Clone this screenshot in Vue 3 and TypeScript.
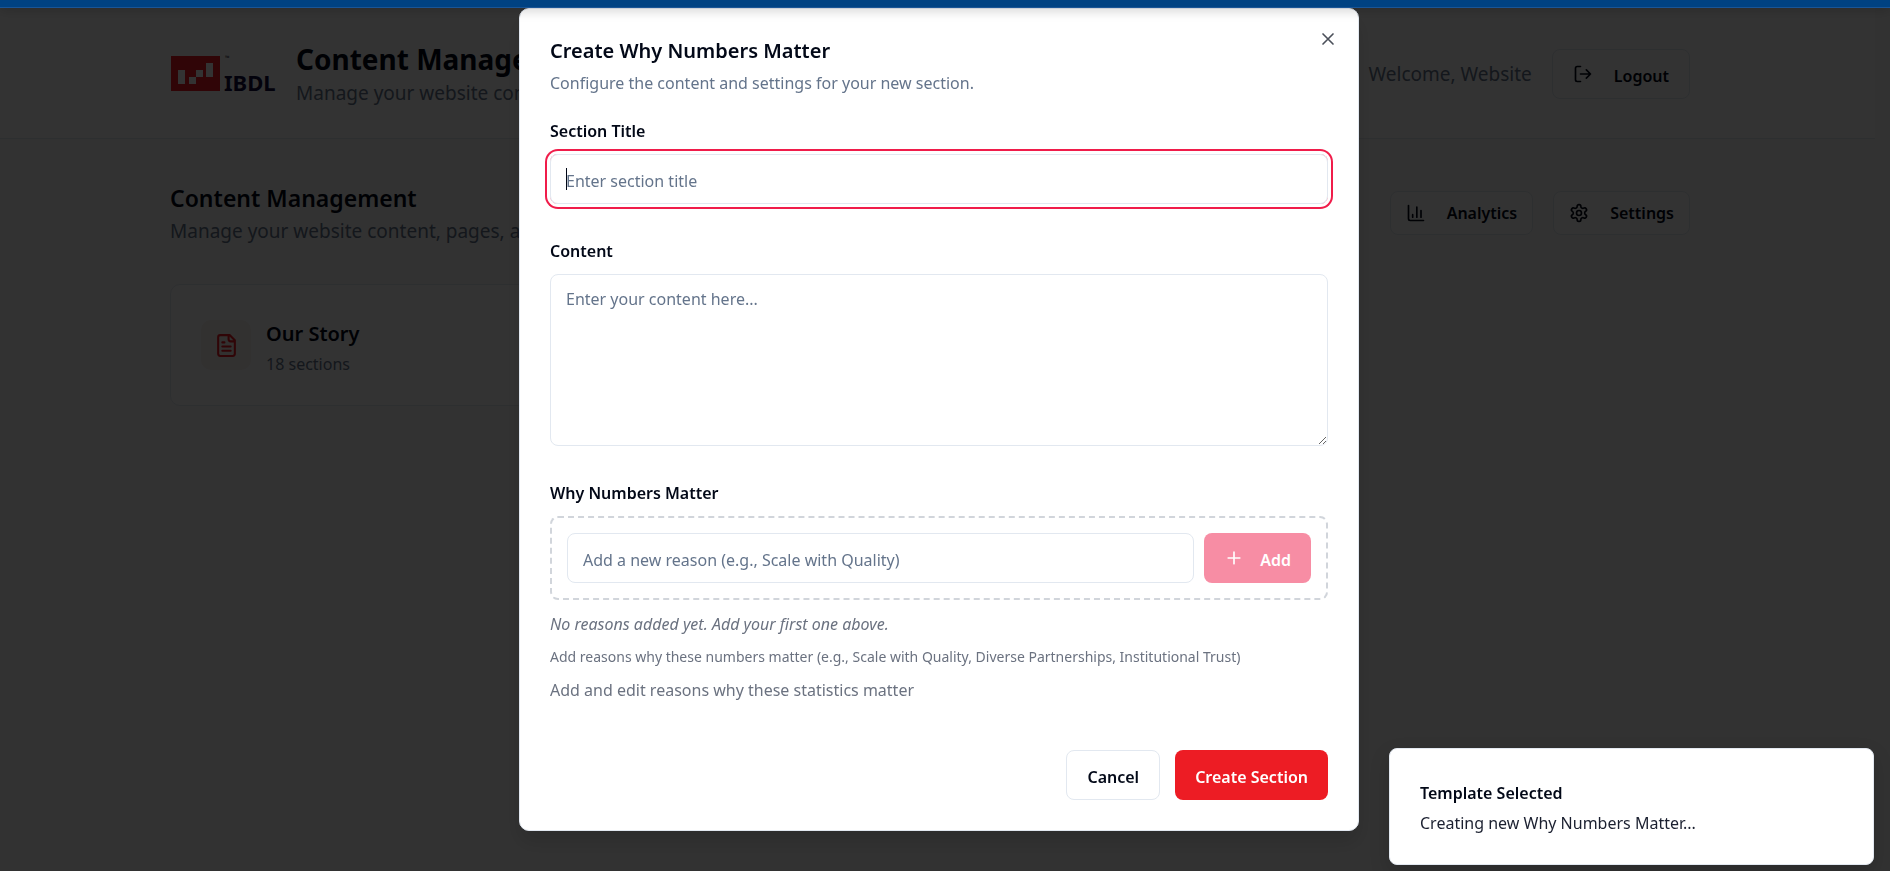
<script setup lang="ts">
import { computed, ref } from 'vue'

const sectionTitle = ref('')
const content = ref('')
const newReason = ref('')
const reasons = ref<string[]>([])
const canAdd = computed(() => newReason.value.trim().length > 0)

function addReason() {
  if (!canAdd.value) return
  reasons.value.push(newReason.value.trim())
  newReason.value = ''
}
</script>

<template>
  <div class="screen">
    <div class="topbar"></div>

    <div class="page">
      <header class="site-header">
        <div class="container header-row">
          <div class="brand">
            <svg class="logo" viewBox="0 0 110 46" role="img" aria-label="IBDL">
              <rect x="1" y="5" width="49" height="35" fill="#ed1c24" />
              <path d="M8 19h7v14H8zM19 26h7v7h-7zM26 19h7v7h-7zM36 12h7v14h-7z" fill="#fff" />
              <text class="logo-tm" x="55" y="9">™</text>
              <text class="logo-name" x="54" y="40">IBDL</text>
            </svg>
            <div>
              <h1>Content Management</h1>
              <p class="sub">Manage your website content</p>
            </div>
          </div>
          <div class="user">
            <span class="sub">Welcome, Website</span>
            <button type="button" class="btn outline">
              <svg class="icon" viewBox="0 0 24 24"><path d="M9 21H5a2 2 0 0 1-2-2V5a2 2 0 0 1 2-2h4M16 17l5-5-5-5M21 12H9" /></svg>
              <span>Logout</span>
            </button>
          </div>
        </div>
      </header>

      <main class="container main">
        <div class="title-row">
          <div>
            <h2>Content Management</h2>
            <p class="sub">Manage your website content, pages, and media</p>
          </div>
          <div class="tools">
            <button type="button" class="btn outline small">
              <svg class="icon" viewBox="0 0 24 24"><path d="M3 3v16a2 2 0 0 0 2 2h16M18 17V9M13 17V5M8 17v-3" /></svg>
              Analytics
            </button>
            <button type="button" class="btn outline small">
              <svg class="icon" viewBox="0 0 24 24"><path d="M12.22 2h-.44a2 2 0 0 0-2 2v.18a2 2 0 0 1-1 1.73l-.43.25a2 2 0 0 1-2 0l-.15-.08a2 2 0 0 0-2.73.73l-.22.38a2 2 0 0 0 .73 2.73l.15.1a2 2 0 0 1 1 1.72v.51a2 2 0 0 1-1 1.74l-.15.09a2 2 0 0 0-.73 2.73l.22.38a2 2 0 0 0 2.73.73l.15-.08a2 2 0 0 1 2 0l.43.25a2 2 0 0 1 1 1.73V20a2 2 0 0 0 2 2h.44a2 2 0 0 0 2-2v-.18a2 2 0 0 1 1-1.73l.43-.25a2 2 0 0 1 2 0l.15.08a2 2 0 0 0 2.73-.73l.22-.39a2 2 0 0 0-.73-2.73l-.15-.08a2 2 0 0 1-1-1.74v-.5a2 2 0 0 1 1-1.74l.15-.09a2 2 0 0 0 .73-2.73l-.22-.38a2 2 0 0 0-2.73-.73l-.15.08a2 2 0 0 1-2 0l-.43-.25a2 2 0 0 1-1-1.73V4a2 2 0 0 0-2-2z" /><circle cx="12" cy="12" r="3" /></svg>
              Settings
            </button>
          </div>
        </div>

        <div class="cards">
          <article class="card">
            <div class="tile">
              <svg class="icon large" viewBox="0 0 24 24"><path d="M15 2H6a2 2 0 0 0-2 2v16a2 2 0 0 0 2 2h12a2 2 0 0 0 2-2V7ZM14 2v4a2 2 0 0 0 2 2h4M10 9H8M16 13H8M16 17H8" /></svg>
            </div>
            <div class="card-text">
              <h3>Our Story</h3>
              <p class="count">18 sections</p>
            </div>
          </article>
        </div>
      </main>
    </div>

    <div class="overlay">
      <form class="dialog" role="dialog" aria-modal="true" aria-labelledby="dialog-title" @submit.prevent>
        <button type="button" class="close" aria-label="Close">
          <svg class="icon" viewBox="0 0 24 24"><path d="M18 6 6 18M6 6l12 12" /></svg>
        </button>

        <h2 id="dialog-title" class="dialog-title">Create Why Numbers Matter</h2>
        <p class="lead">Configure the content and settings for your new section.</p>

        <label class="label" for="section-title">Section Title</label>
        <div class="field active">
          <input id="section-title" v-model="sectionTitle" class="control" type="text" placeholder="Enter section title" />
          <span v-if="!sectionTitle" class="caret"></span>
        </div>

        <label class="label spaced" for="section-content">Content</label>
        <textarea id="section-content" v-model="content" class="control area" placeholder="Enter your content here..."></textarea>

        <label class="label spaced" for="new-reason">Why Numbers Matter</label>
        <div class="reason-box">
          <input id="new-reason" v-model="newReason" class="control" type="text" placeholder="Add a new reason (e.g., Scale with Quality)" />
          <button type="button" class="btn add" :disabled="!canAdd" @click="addReason">
            <svg class="icon" viewBox="0 0 24 24"><path d="M5 12h14M12 5v14" /></svg>
            <span>Add</span>
          </button>
        </div>
        <ul v-if="reasons.length" class="reasons">
          <li v-for="reason in reasons" :key="reason">{{ reason }}</li>
        </ul>
        <p v-else class="note italic">No reasons added yet. Add your first one above.</p>
        <p class="hint">Add reasons why these numbers matter (e.g., Scale with Quality, Diverse Partnerships, Institutional Trust)</p>
        <p class="note">Add and edit reasons why these statistics matter</p>

        <footer class="actions">
          <button type="button" class="btn outline"><span>Cancel</span></button>
          <button type="submit" class="btn primary"><span>Create Section</span></button>
        </footer>
      </form>
    </div>

    <div class="toast" role="status">
      <strong>Template Selected</strong>
      <p>Creating new Why Numbers Matter...</p>
    </div>
  </div>
</template>

<style>
body {
  margin: 0;
  background: #fafafa;
}
</style>

<style scoped>
* {
  box-sizing: border-box;
}
.screen {
  min-height: 100vh;
  overflow: hidden;
  font-family: "Segoe UI", "Noto Sans", "Open Sans", sans-serif;
  font-size: 16px;
  line-height: 24px;
  color: #020817;
}
h1, h2, h3, p {
  margin: 0;
}
button, input, textarea {
  font: inherit;
  color: inherit;
}
.topbar {
  position: fixed;
  inset: 0 0 auto;
  z-index: 5;
  height: 8px;
  background: #004282;
  border-bottom: 1px solid #1a5596;
  box-shadow: 0 2px 12px rgba(0, 0, 0, 0.22);
}
.page {
  margin-right: 15px;
  padding-top: 8px;
}
.container {
  max-width: 1520px;
  margin: 0 auto;
}
.site-header {
  padding-right: 15px;
  background: #fff;
  border-bottom: 1px solid #e2e8f0;
}
.main {
  width: calc(100% - 15px);
  max-width: 1535px;
  padding: 41px 15px 40px 0;
}
.header-row {
  display: flex;
  align-items: center;
  justify-content: space-between;
  height: 130px;
  padding-top: 2px;
}
.brand {
  display: flex;
  align-items: center;
  gap: 16px;
}
.logo {
  width: 110px;
  height: 46px;
}
.logo-tm {
  font-size: 6px;
  fill: #1b1b3a;
}
.logo-name {
  font-size: 22px;
  font-weight: 700;
  fill: #0f0a3c;
}
h1 {
  font-size: 28px;
  font-weight: 700;
  line-height: 38px;
  white-space: nowrap;
}
h2 {
  font-size: 23px;
  font-weight: 600;
  line-height: 36px;
}
.sub {
  font-size: 19px;
  line-height: 30px;
  color: #64748b;
}
.user {
  display: flex;
  align-items: center;
  gap: 20px;
}
.btn {
  display: flex;
  align-items: center;
  justify-content: center;
  height: 50px;
  padding: 0 20px;
  border: 0;
  border-radius: 8px;
  font-weight: 600;
  white-space: nowrap;
  cursor: pointer;
}
.btn span {
  padding-top: 3px;
}
.btn .icon {
  margin-right: 21px;
}
.btn.outline {
  border: 1px solid #e2e8f0;
  background: #fff;
}
.btn.small {
  height: 44px;
  padding: 0 15px;
}
.icon {
  flex: none;
  width: 20px;
  height: 20px;
  fill: none;
  stroke: currentColor;
  stroke-width: 2;
  stroke-linecap: round;
  stroke-linejoin: round;
}
.icon.large {
  width: 25px;
  height: 25px;
}
.title-row {
  display: flex;
  align-items: center;
  justify-content: space-between;
}
.tools {
  display: flex;
  gap: 20px;
}
.cards {
  display: grid;
  grid-template-columns: repeat(3, 1fr);
  gap: 30px;
  margin-top: 38px;
}
.card {
  display: flex;
  align-items: center;
  gap: 15px;
  height: 122px;
  padding: 0 30px;
  border: 1px solid #e2e8f0;
  border-radius: 10px;
  background: #fff;
}
.card-text {
  padding-top: 5px;
}
.tile {
  display: flex;
  align-items: center;
  justify-content: center;
  width: 50px;
  height: 50px;
  border-radius: 10px;
  background: #faf3ee;
  color: #ed1c24;
}
h3 {
  font-size: 20px;
  font-weight: 600;
  line-height: 32px;
}
.count {
  line-height: 28px;
  color: #64748b;
}
.overlay {
  position: fixed;
  inset: 0;
  z-index: 2;
  display: flex;
  align-items: flex-start;
  justify-content: center;
  padding: 8px 12px 0 0;
  background: rgba(0, 0, 0, 0.8);
}
.dialog {
  position: relative;
  width: 100%;
  max-width: 840px;
  padding: 30px;
  border: 1px solid #e2e8f0;
  border-radius: 10px;
  background: #fff;
  box-shadow: 0 12px 20px rgba(0, 0, 0, 0.12);
}
.close {
  position: absolute;
  top: 20px;
  right: 20px;
  display: flex;
  padding: 0;
  border: 0;
  background: none;
  color: #4b505a;
  cursor: pointer;
}
.dialog-title {
  font-size: 20px;
  line-height: 24px;
}
.lead {
  margin-top: 8px;
  color: #64748b;
}
.label {
  display: block;
  margin: 24px 0 11px;
  font-weight: 600;
}
.label.spaced {
  margin-top: 35px;
}
.field {
  position: relative;
  border-radius: 8px;
}
.field.active {
  box-shadow: 0 0 0 3px #fff, 0 0 0 5px #f01c4a;
}
.control {
  display: block;
  width: 100%;
  height: 50px;
  padding: 3px 15px 0;
  border: 1px solid #e2e8f0;
  border-radius: 8px;
  background: #fff;
  outline: none;
}
.control::placeholder {
  color: #64748b;
  opacity: 1;
}
.caret {
  position: absolute;
  top: 14px;
  left: 16px;
  width: 1px;
  height: 22px;
  background: #020817;
}
.control.area {
  height: 172px;
  padding: 12px 15px;
  resize: vertical;
}
.reason-box {
  display: flex;
  gap: 10px;
  padding: 15px;
  border: 2px dashed #d1d5db;
  border-radius: 8px;
}
.btn.add {
  background: #f01c4a;
  color: #fff;
}
.btn.add .icon {
  margin-right: 16px;
}
.btn.add:disabled {
  opacity: 0.5;
}
.reasons {
  margin: 12px 0 0;
  padding-left: 20px;
}
.note {
  margin-top: 12px;
  color: #6b7280;
}
.italic {
  font-style: italic;
}
.hint {
  margin-top: 11px;
  font-size: 14px;
  line-height: 20px;
  color: #6b7280;
}
.hint + .note {
  margin-top: 11px;
}
.actions {
  display: flex;
  justify-content: flex-end;
  gap: 15px;
  margin-top: 48px;
}
.btn.primary {
  background: #ed1c24;
  color: #fff;
}
.toast {
  position: fixed;
  right: 16px;
  bottom: 6px;
  z-index: 4;
  width: 485px;
  padding: 32px 30px 29px;
  border: 1px solid #e2e8f0;
  border-radius: 8px;
  background: #fff;
  box-shadow: 0 8px 20px rgba(0, 0, 0, 0.15);
}
.toast strong {
  display: block;
  font-weight: 600;
}
.toast p {
  margin-top: 6px;
  color: #1b2030;
}
</style>
